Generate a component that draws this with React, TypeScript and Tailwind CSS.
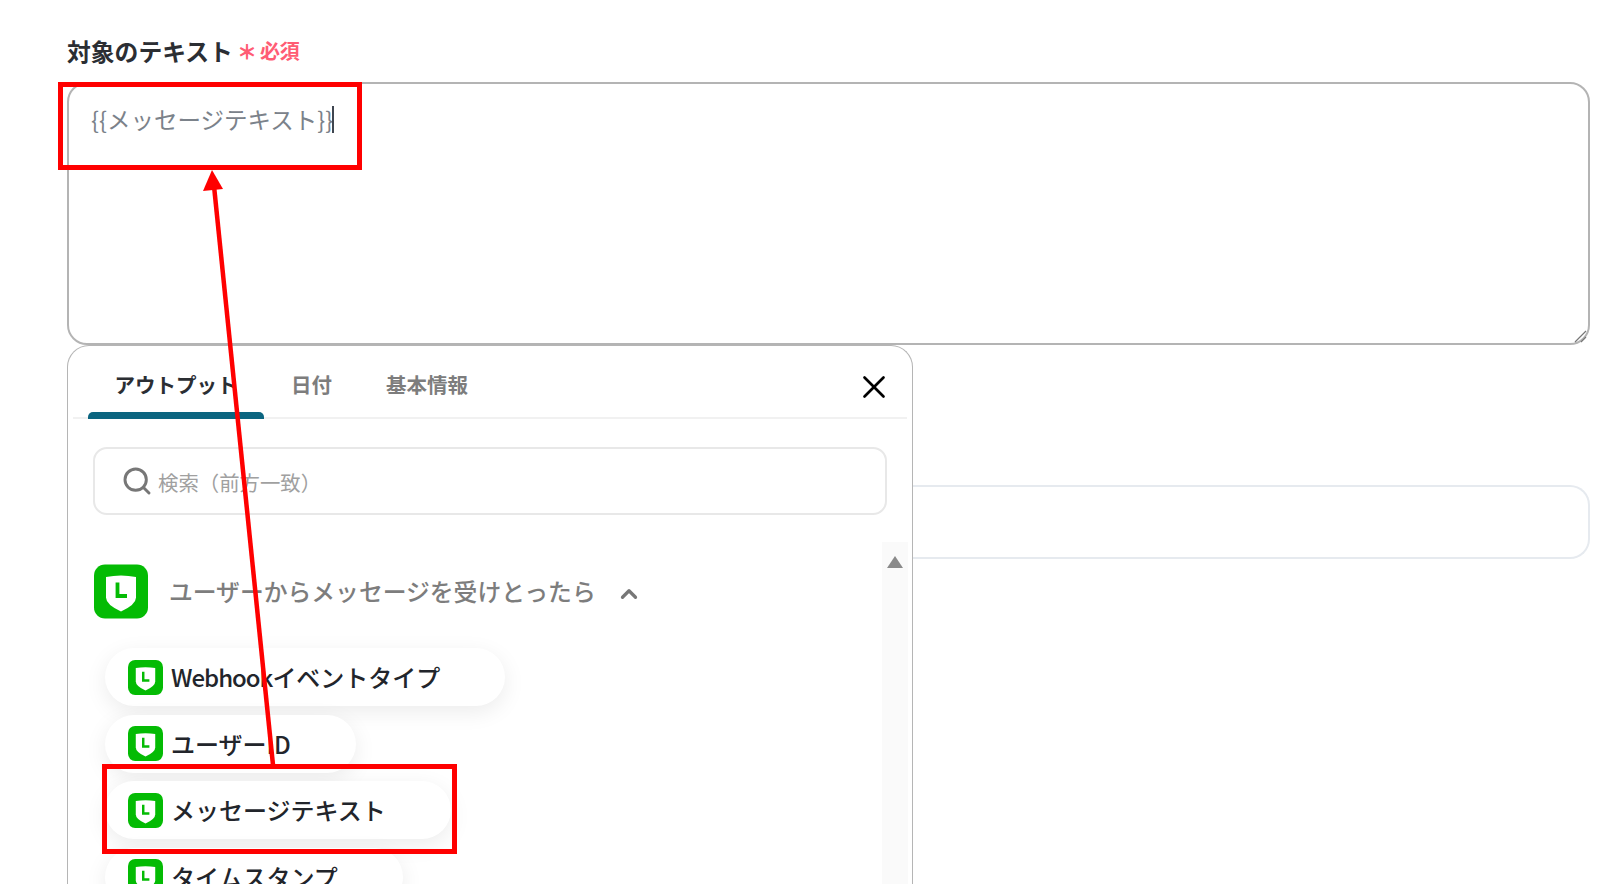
import React from 'react';
import { ChevronUp, Search, X } from 'lucide-react';

const FONT = '"Noto Sans CJK JP", "Noto Sans", sans-serif';

// LINE mark: green rounded square, white shield, green L
const LineIcon: React.FC<{ className: string }> = ({ className }) => (
  <svg viewBox="0 0 54 54" className={className}>
    <rect width="54" height="54" rx="11" fill="#04bb04" />
    <path d="M12 12.5 Q27 9.5 42 12.5 V33 Q42 40 27 47 Q12 40 12 33 Z" fill="#fff" />
    <path d="M23.5 18 V31.5 H33" fill="none" stroke="#04bb04" strokeWidth="3.8" />
  </svg>
);

const Pill: React.FC<{ label: string; latin?: string }> = ({ label, latin }) => (
  <div className="flex h-[58px] w-fit shrink-0 items-center gap-[8px] rounded-[29px] bg-white pl-[23px] pr-[65px] shadow-[0_6px_22px_rgba(0,0,0,0.08)]">
    <LineIcon className="h-[35px] w-[35px]" />
    <span className="text-[24px] font-medium text-[#22252b]">
      {latin && <span className="tracking-[-1px]">{latin}</span>}
      {label}
    </span>
  </div>
);

const App: React.FC = () => {
  return (
    <div
      className="relative flex h-[884px] w-full flex-col overflow-hidden bg-white pl-[67px] pr-[10px] pt-[35px]"
      style={{ fontFamily: FONT }}
    >
      {/* Label */}
      <div className="mb-[15px] flex h-[32px] items-center">
        <span className="text-[23.8px] font-bold leading-[32px] text-[#2b2e33]">対象のテキスト</span>
        <span className="ml-[4px] mt-[2px] text-[20px] font-black leading-[32px] text-[#ff5c74]">＊</span>
        <span className="ml-[3px] text-[20px] font-bold leading-[32px] text-[#ff5c74]">必須</span>
      </div>

      {/* Text area */}
      <div className="relative h-[263px] shrink-0 rounded-[20px] border-2 border-[#b4b4b4] pl-[22px] pt-[16px]">
        <div className="flex items-center text-[23.5px] leading-[38px] text-[#7b828a]">
          <span>{'{{メッセージテキスト}}'}</span>
          <span className="ml-[-1px] h-[27px] w-[2px] bg-[#3f4650]" />
        </div>
        <svg viewBox="0 0 14 14" className="absolute bottom-0 right-[1px] h-[14px] w-[14px]">
          <path d="M2 13 L13 2 M8 13 L13 8" stroke="#777" strokeWidth="1.2" fill="none" />
        </svg>
      </div>

      <div className="flex min-h-0 flex-1">
        {/* Output popover */}
        <div className="flex w-[846px] shrink-0 flex-col rounded-t-[22px] border-x-[1.5px] border-t-[1.5px] border-[#b5b5b5] bg-white">
          <div className="relative mx-[5px] flex h-[73px] shrink-0 items-center border-b-2 border-[#f1f1f1] pl-[15px]">
            <div className="relative flex h-full w-[176px] items-center justify-center pt-[6px] text-[20.5px] font-bold text-[#2b2e33]">
              アウトプット
              <span className="absolute bottom-[-2px] left-0 h-[7px] w-full rounded-t-[5px] bg-[#0b6580]" />
            </div>
            <div className="px-[27px] pt-[6px] text-[20.5px] font-bold text-[#7d7d7d]">日付</div>
            <div className="px-[27px] pt-[6px] text-[20.5px] font-bold text-[#7d7d7d]">基本情報</div>
            <X className="absolute right-[14px] top-[22px] h-[38px] w-[38px] text-black" strokeWidth={1.7} />
          </div>

          <div className="mx-[25px] mt-[28px] flex h-[68px] shrink-0 items-center rounded-[14px] border-2 border-[#e8e8e8] pl-[26px]">
            <Search className="h-[32px] w-[32px] text-[#777]" strokeWidth={2.2} />
            <span className="ml-[5px] mt-[3px] text-[20.4px] text-[#a0a0a0]">検索（前方一致）</span>
          </div>

          <div className="mt-[27px] flex min-h-0 flex-1">
            <div className="min-w-0 flex-1 pl-[26px] pt-[22px]">
              <div className="flex items-center">
                <LineIcon className="h-[55px] w-[54px]" />
                <span className="ml-[21px] mt-[-2px] text-[23.8px] font-medium text-[#7d7d7d]">ユーザーからメッセージを受けとったら</span>
                <ChevronUp className="ml-[20px] mt-[4px] h-[26px] w-[26px] text-[#777]" strokeWidth={3} />
              </div>
              <div className="ml-[11px] mt-[29px] flex flex-col gap-[8.5px]">
                <Pill latin="Webhook" label="イベントタイプ" />
                <Pill label="ユーザーID" />
                <Pill label="メッセージテキスト" />
                <Pill label="タイムスタンプ" />
              </div>
            </div>
            <div className="mr-[4px] flex w-[26px] shrink-0 justify-center bg-[#fafafa] pt-[14px]">
              <span className="h-0 w-0 border-x-[8px] border-b-[12px] border-x-transparent border-b-[#8a8a8a]" />
            </div>
          </div>
        </div>

        {/* Field behind the popover */}
        <div className="mt-[140px] h-[74px] flex-1 rounded-r-[20px] border-y-2 border-r-2 border-[#e6eaef]" />
      </div>

      {/* Annotations */}
      <div className="absolute left-[58px] top-[82px] h-[88px] w-[304px] border-[5px] border-[#ff0000]" />
      <div className="absolute left-[102px] top-[764px] h-[90px] w-[355px] border-[5px] border-[#ff0000]" />
      <svg className="absolute left-0 top-0 h-[884px] w-[1600px]" viewBox="0 0 1600 884">
        <line x1="273" y1="765" x2="214" y2="186" stroke="#ff0000" strokeWidth="4.5" />
        <polygon points="212,170 203,191 223,189" fill="#ff0000" />
      </svg>
    </div>
  );
};

export default App;
